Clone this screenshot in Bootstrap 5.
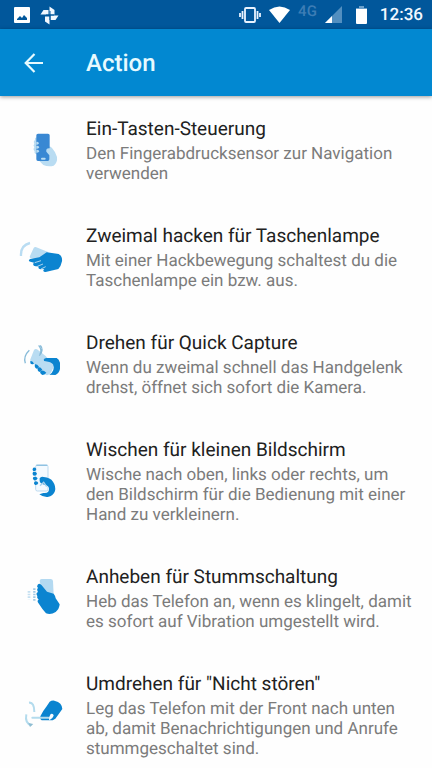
<!DOCTYPE html>
<html lang="de">
<head>
<meta charset="utf-8">
<meta name="viewport" content="width=device-width, initial-scale=1">
<title>Action</title>
<link rel="stylesheet" href="https://cdn.jsdelivr.net/npm/bootstrap@5.3.0/dist/css/bootstrap.min.css">
<style>
body { font-family: Roboto, "Liberation Sans", sans-serif; background: #fefefe; text-rendering: geometricPrecision; }
.status-strip { background: #01579b; height: 29px; padding: 0 9px 0 14px; color: #f2f8ff; }
.status-strip svg { display: block; }
.clock { font-size: 17px; line-height: 20px; font-weight: 500; }
.net-type { font-size: 15px; line-height: 20px; font-weight: 500; color: #3d7db5; margin-bottom: 8px; }
.battery { margin: 0 13px 0 14px; }
.app-bar { background: #0288d1; height: 67px; padding: 0 16px; box-shadow: 0 1px 4px rgba(0,0,0,.4); z-index: 1; }
.app-title { font-size: 24px; line-height: 28px; font-weight: 500; color: #e6faff; }
.back-btn { width: 36px; height: 36px; margin-right: 34px; }
.action-row { padding: 20px 16px 19px 10px; background: transparent; }
.action-icon { width: 70px; height: 60px; margin-right: 6px; }
.action-name { font-size: 19px; line-height: 26px; font-weight: 400; color: #212121; margin-bottom: 2px; }
.action-text { font-size: 17px; line-height: 20px; color: #7b7b7b; }
.deep { fill: #0b84d0; }
.pale { fill: #b9dcf2; }
</style>
<script defer src="https://cdn.jsdelivr.net/npm/bootstrap@5.3.0/dist/js/bootstrap.bundle.min.js"></script>
</head>
<body>
<div class="status-strip d-flex align-items-center justify-content-between">
  <div class="d-flex align-items-center gap-2">
    <svg width="16" height="16" viewBox="0 0 16 16" aria-hidden="true"><path fill="#fff" fill-rule="evenodd" d="M1 0h14q1 0 1 1v14q0 1-1 1H1q-1 0-1-1V1q0-1 1-1zM3 13h10V11l-3-3-2 3-2-2-3 3z"/></svg>
    <svg width="24" height="20" viewBox="0 0 24 20" aria-hidden="true"><g fill="#f2f8ff"><path d="M11.500 9.500V1.500l5 3.500v4.500z"/><path d="M12.500 10.500h8l-3 4.500h-5z"/><path d="M11.500 11.500v8l-4.500-3v-5z"/><path d="M10.500 9.500h-8l3-4.500h5z"/></g><path d="M12 6v9M8 10h8" stroke="#01579b"/></svg>
  </div>
  <div class="d-flex align-items-center">
    <svg class="me-2" width="22" height="18" viewBox="0 0 22 18" fill="none" stroke="#e8f3ff" stroke-width="1.800" aria-hidden="true"><rect x="6" y="2" width="10" height="14" rx="1"/><path d="M3.500 5v8M1 7v4M18.500 5v8M21 7v4"/></svg>
    <svg class="me-2" width="21" height="17" viewBox="0 0 21 17" aria-hidden="true"><path fill="#fff" d="M0 4Q10.500-3 21 4L10.500 17z"/></svg>
    <span class="net-type me-2">4G</span>
    <svg width="17" height="17" viewBox="0 0 17 17" aria-hidden="true"><path fill="#528fc0" d="M17 0v17H0z"/><path fill="#fff" d="M7 10v7H0z"/></svg>
    <svg class="battery" width="11" height="18" viewBox="0 0 11 18" aria-hidden="true"><path fill="#6ba0cb" d="M3 0h5v2h3v3H0V2h3z"/><path fill="#fff" d="M0 3h11v14q0 1-1 1H1q-1 0-1-1z"/></svg>
    <span class="clock">12:36</span>
  </div>
</div>
<header class="app-bar d-flex align-items-center position-relative">
  <button type="button" class="back-btn btn p-0 border-0 d-flex align-items-center justify-content-center" aria-label="Zurück">
    <svg width="20" height="20" viewBox="0 0 20 20" fill="none" stroke="#e6faff" stroke-width="2.200" aria-hidden="true"><path d="M19 10H2M10.500 1L1.700 10l8.800 9"/></svg>
  </button>
  <h1 class="app-title mb-0">Action</h1>
</header>
<main class="list-group list-group-flush rounded-0">
  <a href="#" class="action-row list-group-item list-group-item-action border-0 d-flex align-items-center">
    <svg class="action-icon flex-shrink-0" viewBox="0 0 210 180" aria-hidden="true"><path class="pale" d="M82 52q-9 0-7 8-6 4-2 11-5 5 0 11-5 7 1 12-3 7 8 10zM110 83q8-7 16 1 9 9 15 27 2 17-10 26-16 4-31-2l-12-12z"/><path fill="#3988d3" d="M84 41h30q5 0 5 5v39q-12-1-10 10l9 11v12q0 5-5 5H84q-5 0-5-5V46q0-5 5-5z"/><path class="pale" d="M79 66q6-2 8 4-2 5-8 4zM79 78q7-2 9 4-2 5-9 4zM79 90q7-2 9 4-2 5-9 4z"/><rect class="pale" x="93" y="113" width="14" height="6" rx="3"/></svg>
    <div><h2 class="action-name">Ein-Tasten-Steuerung</h2><p class="action-text mb-0">Den Fingerabdrucksensor zur Navigation verwenden</p></div>
  </a>
  <a href="#" class="action-row list-group-item list-group-item-action border-0 d-flex align-items-center">
    <svg class="action-icon flex-shrink-0" viewBox="0 0 210 180" aria-hidden="true"><path d="M33 87q-2-32 27-39" fill="none" stroke="#b9dcf2" stroke-width="7"/><path class="pale" d="M71 63q3-4 8-2l37 15-29 20-26-3q-3-2-1-6z"/><path class="deep" d="M88 91l22-15 36 5q12 7 10 22-3 15-11 23l-38 9q-8 0-7-6l3-3-11 1q-9-1-6-8l-7-1q-9 1-10-7l3-4-8-2q-9-1-7-6l3-3z"/><path d="M74 107l19-6M82 118l17-7M93 126l14-7" stroke="#fefefe" stroke-width="2"/></svg>
    <div><h2 class="action-name">Zweimal hacken für Taschenlampe</h2><p class="action-text mb-0">Mit einer Hackbewegung schaltest du die Taschenlampe ein bzw. aus.</p></div>
  </a>
  <a href="#" class="action-row list-group-item list-group-item-action border-0 d-flex align-items-center">
    <svg class="action-icon flex-shrink-0" viewBox="0 9 210 180" aria-hidden="true"><path class="pale" d="M72 57q4-5 9-2l26 20q5 9 16 12 13 4 9 18l-7 16q-10 17-20 9L60 88z"/><path class="deep" d="M101 86q2-6 11-5h28q7 3 10 14v19q-3 14-14 18l-18-1q9-5 12-14 3-10-1-17-6-7-22-9-6 0-6-5zM61 90q7-2 11 8-7 4-11-1zM75 100q6-1 12 7l-7 6q-8-3-5-13zM82 112q7-8 15 4l-8 7q-7-2-7-11zM90 123q6-10 19 2-5 7-12 7-6-3-7-9z"/><path d="M46 97q-7-21 12-39M86 43q11 13 4 27M91 43q12 13-3 31" fill="none" stroke="#86bad8" stroke-width="4"/></svg>
    <div><h2 class="action-name">Drehen für Quick Capture</h2><p class="action-text mb-0">Wenn du zweimal schnell das Handgelenk drehst, öffnet sich sofort die Kamera.</p></div>
  </a>
  <a href="#" class="action-row list-group-item list-group-item-action border-0 d-flex align-items-center">
    <svg class="action-icon flex-shrink-0" viewBox="0 0 210 180" aria-hidden="true"><rect x="77" y="42" width="37" height="78" rx="5" fill="#f4faff" stroke="#bcdaef" stroke-width="3"/><path d="M79 43h33" stroke="#8fc2e2" stroke-width="4"/><path class="deep" d="M70 50q8-2 9 5-1 6-8 6-6-5-1-11zM69 63q10-2 12 5-2 7-10 6-6-5-2-11zM70 78q10-3 13 4-2 7-11 6-6-4-2-10zM73 92q9-3 12 4-2 7-10 6-5-4-2-10z"/><path class="deep" d="M89 82q4-7 12-4 20 2 28 14 9 13 6 28-5 15-22 18-14 1-25-8l12-4q19 2 17-14-1-9-14-11-13-3-14-11z"/><path d="M90 104l11-10 9 13" fill="none" stroke="#a9d2ec" stroke-width="4"/></svg>
    <div><h2 class="action-name">Wischen für kleinen Bildschirm</h2><p class="action-text mb-0">Wische nach oben, links oder rechts, um den Bildschirm für die Bedienung mit einer Hand zu verkleinern.</p></div>
  </a>
  <a href="#" class="action-row list-group-item list-group-item-action border-0 d-flex align-items-center">
    <svg class="action-icon flex-shrink-0" viewBox="0 7 210 180" aria-hidden="true"><path fill="#b3d9f1" d="M95 40h27q6 0 7 6l2 43-35-12-7-31q0-6 6-6z"/><path class="deep" d="M83 57q6-6 12 2l16 19 20 6q5 6 6 14l12 18q-1 14-12 23-15 10-29 4-11-12-23-31-5-8 1-10-7-6-4-11-6-9 2-12-5-9 0-12-5-5-1-10z"/><path d="M73 68v40" stroke="#a2c9e4" stroke-width="7" stroke-dasharray="5 3"/><path d="M57 76v25" stroke="#c5e0f1" stroke-width="8" stroke-dasharray="5 3"/></svg>
    <div><h2 class="action-name">Anheben für Stummschaltung</h2><p class="action-text mb-0">Heb das Telefon an, wenn es klingelt, damit es sofort auf Vibration umgestellt wird.</p></div>
  </a>
  <a href="#" class="action-row list-group-item list-group-item-action border-0 d-flex align-items-center">
    <svg class="action-icon flex-shrink-0" viewBox="0 -2 210 180" aria-hidden="true"><path class="deep" d="M119 48q6-4 14-3 13 3 18 9 6 7 6 16l-21 29-8 5H95q-6-3-4-12 7-15 19-30z"/><path d="M116 97l6-12q8-3 9 5l-4 7-9 7z" fill="#f6fbff"/><rect x="64" y="93" width="54" height="6" rx="3" fill="#b3dbed"/><path d="M73 79Q73 49 57 51M49 86q-5 26 15 33" fill="none" stroke="#b3dbed" stroke-width="6"/><path d="M55 112l15 3-10 9z" fill="#8fbdd2"/></svg>
    <div><h2 class="action-name">Umdrehen für "Nicht stören"</h2><p class="action-text mb-0">Leg das Telefon mit der Front nach unten ab, damit Benachrichtigungen und Anrufe stummgeschaltet sind.</p></div>
  </a>
</main>
</body>
</html>
